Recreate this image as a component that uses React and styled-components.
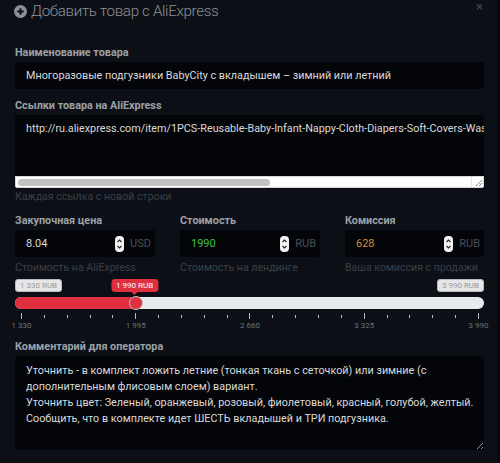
import React from 'react';
import styled, { createGlobalStyle } from 'styled-components';

const font = "Roboto, 'Noto Sans', sans-serif";

const GlobalStyle = createGlobalStyle`
  html, body {
    margin: 0;
    padding: 0;
    background: #05070a;
  }
  body {
    font-family: ${font};
  }
`;

const Modal = styled.div`
  width: 497px;
  height: 463px;
  box-sizing: border-box;
  background: #0c1016;
  padding: 0 13px 0 15px;
  overflow: hidden;
`;

const Header = styled.div`
  position: relative;
  height: 22px;
  display: flex;
  align-items: center;
  gap: 4px;
  margin-left: -1px;
`;

const Title = styled.h3`
  margin: 0;
  font-size: 15.2px;
  font-weight: 300;
  color: #8d9197;
  letter-spacing: -0.35px;
`;

const Close = styled.span`
  position: absolute;
  right: 1px;
  top: 0;
  font-size: 13px;
  line-height: 14px;
  color: #43474d;
`;

const Body = styled.div`
  padding-top: 24px;
`;

const Label = styled.div`
  font-size: 10.8px;
  font-weight: 700;
  color: #9da1a6;
  line-height: 14px;
  margin-bottom: ${(p) => p.$gap ?? 2}px;
`;

const Field = styled.div`
  margin-bottom: ${(p) => p.$mb ?? 10}px;
`;

const TextInput = styled.div`
  height: 27px;
  background: #040509;
  border-radius: 3px;
  display: flex;
  align-items: center;
  padding: 0 8px 0 11px;
  font-size: 10.8px;
  color: #d9dadc;
  white-space: nowrap;
  overflow: hidden;
`;

const LinksBox = styled.div`
  background: #040509;
  border-radius: 3px;
  overflow: hidden;
`;

const Area = styled.textarea`
  display: block;
  width: 100%;
  box-sizing: border-box;
  height: ${(p) => p.$h}px;
  background: #040509;
  border: none;
  border-radius: 3px;
  padding: ${(p) => p.$pt}px 8px 0 11px;
  font-family: ${font};
  font-size: 10.8px;
  line-height: 16px;
  color: #d9dadc;
  outline: none;
  resize: ${(p) => (p.$fixed ? 'none' : 'vertical')};
  overflow: hidden;
  white-space: ${(p) => (p.$fixed ? 'pre' : 'pre-wrap')};
`;

const ScrollBar = styled.div`
  height: 12px;
  background: #ffffff;
  display: flex;
  align-items: center;
  border: 1px solid #d6d6d6;
  box-sizing: border-box;
`;

const Thumb = styled.div`
  height: 7px;
  margin-left: 2px;
  border-radius: 4px;
  background: #c2c2c2;
`;

const Grip = styled.div`
  margin-left: auto;
  width: 11px;
  height: 100%;
  border-left: 1px solid #e2e2e2;
  display: flex;
  align-items: flex-end;
  justify-content: flex-end;
`;

const Help = styled.div`
  font-size: 10.6px;
  color: #3a3f46;
  line-height: 14px;
  white-space: nowrap;
  margin-top: ${(p) => p.$mt ?? 2}px;
`;

const Row = styled.div`
  display: grid;
  grid-template-columns: 140px 140px 139px;
  column-gap: 25px;
  margin-bottom: 4px;
`;

const NumberBox = styled.div`
  height: 27px;
  margin-top: 2px;
  background: #040509;
  border-radius: 3px;
  display: flex;
  align-items: center;
  padding: 0 4px 0 11px;
  font-size: 11px;
`;

const Value = styled.span`
  flex: 1;
  color: ${(p) => p.$color};
`;

const Unit = styled.span`
  color: #4a4f56;
  margin-left: 6px;
  font-size: 11px;
`;

const Slider = styled.div`
  margin-bottom: 9px;
`;

const Badges = styled.div`
  position: relative;
  height: 15px;
  display: flex;
  justify-content: space-between;
  align-items: flex-start;
`;

const Badge = styled.span`
  font-size: 8px;
  line-height: 11px;
  padding: 0 4px;
  border-radius: 3px;
  background: ${(p) => (p.$active ? '#e02f3e' : '#e6e6e8')};
  color: ${(p) => (p.$active ? '#ffffff' : '#9a9a9a')};
  border: 1px solid ${(p) => (p.$active ? '#e02f3e' : '#b9b9bd')};
  white-space: nowrap;
`;

const Pointer = styled(Badge)`
  position: absolute;
  top: 0;
  transform: translateX(-50%);
  &::after {
    content: '';
    position: absolute;
    left: 50%;
    bottom: -4px;
    margin-left: -3px;
    border-left: 3px solid transparent;
    border-right: 3px solid transparent;
    border-top: 3px solid #e02f3e;
  }
`;

const Track = styled.div`
  position: relative;
  height: 12px;
  margin-top: 3px;
  border-radius: 6px;
  background: #e9eaee;
`;

const Fill = styled.div`
  height: 100%;
  border-radius: 6px 0 0 6px;
  background: #e02f3e;
`;

const Handle = styled.div`
  position: absolute;
  top: -1px;
  width: 12px;
  height: 12px;
  border-radius: 50%;
  margin-left: -6px;
  background: #e02f3e;
  border: 1px solid #b8c4c4;
`;

const Ticks = styled.div`
  display: flex;
  justify-content: space-between;
  align-items: flex-start;
  margin: 4px 5px 0 6px;
  height: 7px;
`;

const Tick = styled.span`
  width: 1px;
  height: ${(p) => (p.$major ? 6 : 3)}px;
  margin-top: ${(p) => (p.$major ? 0 : 2)}px;
  background: #b8bcc2;
`;

const Scale = styled.div`
  display: flex;
  justify-content: space-between;
  margin: 0 5px 0 6px;
  height: 11px;
`;

const ScaleLabel = styled.span`
  width: 1px;
  display: flex;
  justify-content: center;
  font-size: 8px;
  line-height: 11px;
  color: #6c7077;
  white-space: nowrap;
`;

function PlusCircle() {
  return (
    <svg width="13" height="13" viewBox="0 0 16 16">
      <circle cx="8" cy="8" r="8" fill="#8d9197" />
      <path d="M8 4v8M4 8h8" stroke="#0c1016" strokeWidth="2.4" />
    </svg>
  );
}

function Spinner() {
  return (
    <svg width="9" height="16" viewBox="0 0 9 16">
      <rect x="0" y="0" width="9" height="16" rx="4" fill="#f2f2f2" />
      <path d="M2.5 6l2-2 2 2M2.5 10l2 2 2-2" stroke="#222" strokeWidth="1.1" fill="none" />
    </svg>
  );
}

function ResizeMark() {
  return (
    <svg width="9" height="9" viewBox="0 0 9 9">
      <path d="M8 2L2 8M8 5L5 8" stroke="#8a8a8a" strokeWidth="1" />
    </svg>
  );
}

const min = 1330;
const max = 3990;
const price = 1990;

const links =
  'http://ru.aliexpress.com/item/1PCS-Reusable-Baby-Infant-Nappy-Cloth-Diapers-Soft-Covers-Washable-Baby-Diaper-Cover-Nappy-Changing-Pants/32599856204.html';

const comment =
  'Уточнить - в комплект ложить летние (тонкая ткань с сеточкой) или зимние (с дополнительным флисовым слоем) вариант.\n' +
  'Уточнить цвет: Зеленый, оранжевый, розовый, фиолетовый, красный, голубой, желтый.\n' +
  'Сообщить, что в комплекте идет ШЕСТЬ вкладышей и ТРИ подгузника.';

const prices = [
  { label: 'Закупочная цена', value: '8.04', color: '#d9dadc', unit: 'USD', help: 'Стоимость на AliExpress' },
  { label: 'Стоимость', value: '1990', color: '#3cc23c', unit: 'RUB', help: 'Стоимость на лендинге' },
  { label: 'Комиссия', value: '628', color: '#d38a3c', unit: 'RUB', help: 'Ваша комиссия с продажи' },
];

const scale = ['1 330', '1 995', '2 660', '3 325', '3 990'];

export default function App() {
  // track inner range is inset by 6px left / 5px right
  const ratio = (price - min) / (max - min);
  const pos = `calc(6px + ${ratio} * (100% - 11px))`;

  return (
    <>
      <GlobalStyle />
      <Modal>
        <Header>
          <PlusCircle />
          <Title>Добавить товар с AliExpress</Title>
          <Close>×</Close>
        </Header>
        <Body>
          <Field $mb={10}>
            <Label $gap={2}>Наименование товара</Label>
            <TextInput>Многоразовые подгузники BabyCity с вкладышем – зимний или летний</TextInput>
          </Field>

          <Field $mb={10}>
            <Label>Ссылки товара на AliExpress</Label>
            <LinksBox>
              <Area $h={61} $pt={6} $fixed wrap="off" defaultValue={links} />
              <ScrollBar>
                <Thumb style={{ width: 252 }} />
                <Grip>
                  <ResizeMark />
                </Grip>
              </ScrollBar>
            </LinksBox>
            <Help>Каждая ссылка с новой строки</Help>
          </Field>

          <Row>
            {prices.map((p) => (
              <div key={p.label}>
                <Label>{p.label}</Label>
                <NumberBox>
                  <Value $color={p.color}>{p.value}</Value>
                  <Spinner />
                  <Unit>{p.unit}</Unit>
                </NumberBox>
                <Help $mt={4}>{p.help}</Help>
              </div>
            ))}
          </Row>

          <Slider>
            <Badges>
              <Badge>1 330 RUB</Badge>
              <Pointer $active style={{ left: pos }}>1 990 RUB</Pointer>
              <Badge>3 990 RUB</Badge>
            </Badges>
            <Track>
              <Fill style={{ width: pos }} />
              <Handle style={{ left: pos }} />
            </Track>
            <Ticks>
              {Array.from({ length: 21 }, (_, i) => (
                <Tick key={i} $major={i % 5 === 0} />
              ))}
            </Ticks>
            <Scale>
              {scale.map((s) => (
                <ScaleLabel key={s}>{s}</ScaleLabel>
              ))}
            </Scale>
          </Slider>

          <Field>
            <Label>Комментарий для оператора</Label>
            <Area $h={94} $pt={7} defaultValue={comment} />
          </Field>
        </Body>
      </Modal>
    </>
  );
}
